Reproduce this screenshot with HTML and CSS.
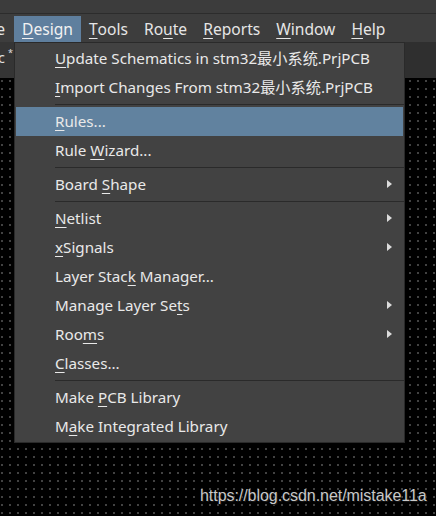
FILE: index.html
```html
<!DOCTYPE html>
<html>
<head>
<meta charset="utf-8">
<link rel="stylesheet" href="styles.css">
</head>
<body>
<div class="app">
  <div class="titlebar"></div>
  <div class="menubar">
    <span class="mb-item cut"><span>Place</span></span>
    <span class="mb-item active"><u>D</u>esign</span>
    <span class="mb-item"><u>T</u>ools</span>
    <span class="mb-item">Ro<u>u</u>te</span>
    <span class="mb-item"><u>R</u>eports</span>
    <span class="mb-item"><u>W</u>indow</span>
    <span class="mb-item"><u>H</u>elp</span>
  </div>
  <div class="tabstrip">
    <span class="tab"><span>PcbDoc</span><span class="star">*</span></span>
  </div>
  <div class="canvas"></div>
  <div class="watermark">https://blog.csdn.net/mistake11a</div>

  <div class="menu">
    <div class="mi"><span class="label"><u>U</u>pdate Schematics in stm32最小系统.PrjPCB</span></div>
    <div class="mi"><span class="label"><u>I</u>mport Changes From stm32最小系统.PrjPCB</span></div>
    <div class="sep"></div>
    <div class="mi hl"><span class="label"><u>R</u>ules...</span></div>
    <div class="mi"><span class="label">Rule <u>W</u>izard...</span></div>
    <div class="sep"></div>
    <div class="mi"><span class="label">Board <u>S</u>hape</span><span class="arrow"></span></div>
    <div class="sep"></div>
    <div class="mi"><span class="label"><u>N</u>etlist</span><span class="arrow"></span></div>
    <div class="mi"><span class="label"><u>x</u>Signals</span><span class="arrow"></span></div>
    <div class="mi"><span class="label">Layer Stac<u>k</u> Manager...</span></div>
    <div class="mi"><span class="label">Manage Layer Se<u>t</u>s</span><span class="arrow"></span></div>
    <div class="mi"><span class="label">Roo<u>m</u>s</span><span class="arrow"></span></div>
    <div class="mi"><span class="label"><u>C</u>lasses...</span></div>
    <div class="sep"></div>
    <div class="mi"><span class="label">Make <u>P</u>CB Library</span></div>
    <div class="mi"><span class="label">M<u>a</u>ke Integrated Library</span></div>
  </div>
</div>
</body>
</html>
```

FILE: styles.css
```css
html, body {
  margin: 0;
  padding: 0;
}
body {
  width: 436px;
  height: 516px;
  overflow: hidden;
  background-color: #000;
  font-family: "Noto Sans", "Noto Sans CJK SC", sans-serif;
  color: #e8e8e8;
}
.app {
  position: relative;
  width: 436px;
  height: 516px;
  display: flex;
  flex-direction: column;
}
.titlebar {
  height: 13px;
  flex: none;
  background: #3c3c3c;
  border-bottom: 1px solid #2c2c2c;
}
.menubar {
  height: 28px;
  flex: none;
  background: #3d3d3d;
  display: flex;
  align-items: stretch;
  font-size: 15.6px;
}
.mb-item {
  display: flex;
  align-items: center;
  padding: 2px 8px 0;
  margin-top: 2px;
  color: #e6e6e6;
  line-height: 1;
}
.mb-item.cut {
  width: 14px;
  padding: 2px 0 0;
  overflow: hidden;
  justify-content: flex-end;
}
.mb-item.cut > span {
  flex: none;
  margin-right: 9px;
}
.mb-item.active {
  background: #5f7f9e;
  color: #f2f2f2;
}
u {
  text-decoration: underline;
  text-underline-offset: 3px;
  text-decoration-thickness: 1px;
}
.tabstrip {
  height: 36px;
  flex: none;
  background: #2f2f2f;
  display: flex;
}
.tab {
  width: 14px;
  background: #353535;
  overflow: hidden;
  display: flex;
  justify-content: flex-end;
  align-items: flex-start;
  white-space: nowrap;
  font-size: 15px;
  line-height: 30px;
  color: #e0e0e0;
}
.tab > span {
  flex: none;
}
.tab .star {
  font-size: 9px;
  line-height: 22px;
  margin-left: 3px;
  margin-right: 1px;
}
.canvas {
  flex: 1;
  background-color: #000;
  background-image: radial-gradient(circle, #474747 0.7px, transparent 0.8px);
  background-size: 8px 8px;
  background-position: -2px -1px;
}
.watermark {
  position: absolute;
  left: 200px;
  top: 487px;
  font-family: "Liberation Sans", Arial, sans-serif;
  font-size: 16px;
  color: #c8c8c8;
  text-shadow: 0 0 2px #000, 1px 1px 1px #222;
  letter-spacing: -0.05px;
}
.menu {
  position: absolute;
  left: 14px;
  top: 42px;
  width: 389px;
  height: 398px;
  background: #424242;
  border: 1px solid #2a2a2a;
  padding-top: 1px;
  display: flex;
  flex-direction: column;
  font-size: 15.2px;
}
.mi {
  height: 29px;
  flex: none;
  display: flex;
  align-items: center;
  padding-left: 39px;
  margin: 0 1px;
  position: relative;
}
.mi.hl {
  background: #61829f;
}
.label {
  white-space: nowrap;
  color: #e9e9e9;
  line-height: 1;
}
.arrow {
  position: absolute;
  right: 11px;
  top: 10px;
  width: 0;
  height: 0;
  border-top: 4.5px solid transparent;
  border-bottom: 4.5px solid transparent;
  border-left: 5px solid #dcdcdc;
}
.sep {
  height: 5px;
  flex: none;
  display: flex;
  align-items: center;
  padding-left: 40px;
}
.sep::after {
  content: "";
  flex: 1;
  height: 1px;
  background: #2a2a2a;
}
```
